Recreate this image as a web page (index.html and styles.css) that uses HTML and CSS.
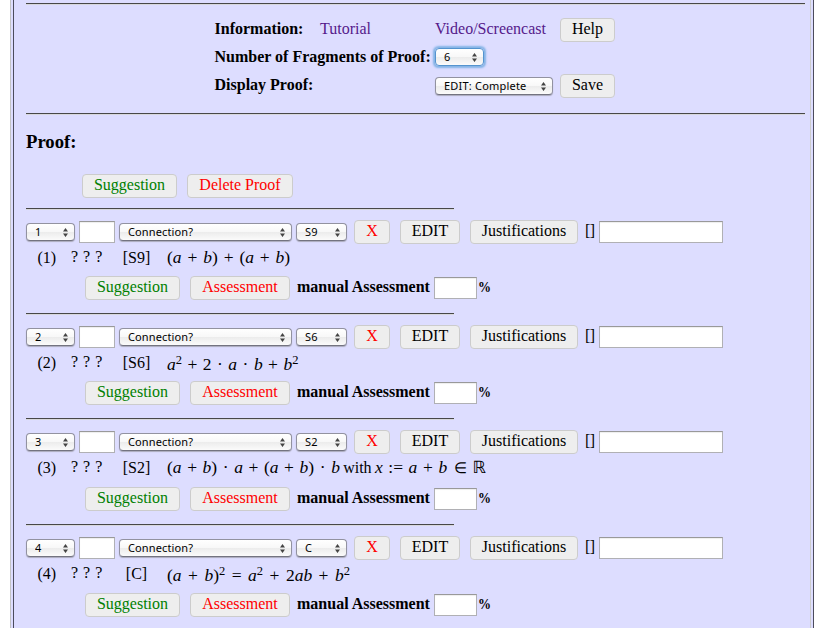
FILE: index.html
```html
<!DOCTYPE html>
<html lang="en">
<head>
<meta charset="utf-8">
<title>Proof</title>
<link rel="stylesheet" href="styles.css">
</head>
<body>
<svg class="defs"><symbol id="arrows" viewBox="0 0 5 9"><path d="M0 3.5 2.5 0 5 3.5zM0 5.5 2.5 9 5 5.5z" fill="#444"/></symbol></svg>
<div class="frame"><main class="page">
<hr>
<section class="settings">
<div class="setting"><b class="info">Information:</b><a class="tutorial">Tutorial</a><a class="video">Video/Screencast</a><button class="btn help">Help</button></div>
<div class="setting"><b class="label">Number of Fragments of Proof:</b><span class="select count focus"><select><option>6</option></select><svg><use href="#arrows"/></svg></span></div>
<div class="setting"><b class="label">Display Proof:</b><span class="select mode"><select><option>EDIT: Complete</option></select><svg><use href="#arrows"/></svg></span><button class="btn help">Save</button></div>
</section>
<hr>
<h3>Proof:</h3>
<div class="actions"><button class="btn green">Suggestion</button><button class="btn red delete">Delete Proof</button></div>
<div id="steps"></div>
</main></div>
<script src="script.js"></script>
</body>
</html>
```
FILE: styles.css
```css
* { box-sizing: border-box; }
html, body { margin: 0; height: 628px; overflow: hidden; background: #fff; }
body { font: 16px/20px "Liberation Serif", serif; color: #000; }
.defs { display: none; }
.frame { margin-left: 10px; width: 804px; height: 628px; padding: 0 2px; border-left: 1px solid #c4c4c4; border-right: 1px solid #4c4c5c; background: #ddf; }
.page { width: 798px; height: 628px; padding: 3px 5px 0 12px; border-left: 1px solid #4c4c5c; border-right: 1px solid #ccc; }
hr { margin: 0; height: 2px; border: 0; border-top: 1px solid #484848; border-bottom: 1px solid #d8d8dc; }
.settings { height: 108px; padding: 11px 0 0 188px; }
.setting { display: flex; align-items: center; height: 28px; white-space: nowrap; }
.setting b, .setting a { position: relative; top: -1px; }
.setting b { left: .5px; }
.info { width: 106px; }
.tutorial { width: 115px; color: #551a8b; }
.video { width: 118px; color: #551a8b; }
.label { width: 221px; }
.btn { flex: none; height: 24px; margin: 0; padding: 0 0 3px; border: 1px solid #ccc; border-radius: 4px; background: #eee; font: 16px/18px "Liberation Serif", serif; color: #000; width: 95px; white-space: nowrap; }
.help { width: 55px; margin-left: 7px; }
.green { color: #008000; }
.red { color: #f00; }
.select { position: relative; flex: none; height: 18px; border: 1px solid #9292a0; border-bottom-color: #737380; border-radius: 4px; background: linear-gradient(#fff, #f8f8f8 48%, #ececec 52%, #fbfbfb); box-shadow: 0 1px 1px #aaaabc; }
.select select { display: block; appearance: none; width: 100%; height: 16px; margin: 0; padding: 0 0 0 8px; border: 0; outline: 0; background: none; font: 11px/16px "Noto Sans", sans-serif; letter-spacing: .12px; color: #000; }
.select svg { position: absolute; right: 6px; top: 4px; width: 5px; height: 9px; }
.focus { top: -1px; border-color: #5594cf; box-shadow: 0 0 2px 1.5px #83b3e6; }
.count { width: 49px; }
.mode { width: 118px; }
.mode select { letter-spacing: .2px; }
h3 { margin: 0; padding-top: 15px; height: 59px; font-size: 18.7px; line-height: 24px; }
.actions { display: flex; gap: 10px; height: 34px; padding-left: 56px; }
.delete { width: 106px; }
.step { height: 105px; }
.step:nth-child(3) { height: 106px; }
.step hr { width: 428px; }
.controls { display: flex; align-items: center; height: 24px; margin-top: 10px; }
input { flex: none; display: block; margin: 0; padding: 0; height: 22px; border: 1px solid #b0b0b4; border-top-color: #999; border-radius: 0; background: #fff; box-shadow: inset 0 1px 1px #eee; }
.num { width: 49px; }
.mark { width: 36px; margin: 0 4px; }
.conn { width: 173px; }
.ref { width: 51px; margin: 0 7px 0 4px; }
.x { width: 36px; }
.edit { width: 60px; margin: 0 10px; }
.just { width: 108px; }
.brackets { width: 14px; margin-left: 7px; position: relative; top: -1px; letter-spacing: -.5px; }
.reason { width: 124px; }
.line { display: flex; height: 32px; padding: 3px 0 0 11px; white-space: nowrap; }
.step:nth-child(n+3) .line { height: 33px; }
.line > span { position: relative; }
.idx { width: 34px; left: .5px; top: 1px; }
.marks { width: 44px; top: -.5px; letter-spacing: .5px; }
.src { width: 53px; text-align: center; padding-right: 9px; left: -.5px; top: 1px; }
.math { font-size: 17.5px; left: -1px; word-spacing: 1.1px; }
.m1 { word-spacing: 1.5px; }
.m2 { top: 2px; }
.m3 { word-spacing: 1.2px; }
.m4 { top: 2px; word-spacing: 2.1px; }
.math sup { font-size: 12.5px; line-height: 0; vertical-align: 6px; }
.math .word { font-size: 16px; word-spacing: -.7px; letter-spacing: 0; }
.member { display: inline-block; font-size: 15px; margin: 0 5px 0 6px; width: 14px; text-align: center; }
.real { font: 17px/16px "DejaVu Sans", sans-serif; }
.assess { display: flex; align-items: center; height: 24px; padding-left: 59px; }
.assess .red { width: 100px; margin: 0 7px 0 10px; }
.assess b { white-space: nowrap; position: relative; top: -1px; }
.manual { width: 137px; }
.score { width: 43px; margin-right: 1px; }
.assess .percent { font-size: 15.5px; transform: scaleX(.84); transform-origin: left; }
```
FILE: script.js
```js
const arrows = '<svg><use href="#arrows"/></svg>';
const select = (cls, text) => `<span class="select ${cls}"><select><option>${text}</option></select>${arrows}</span>`;
const steps = [
  ['S9', '(<i>a</i> + <i>b</i>) + (<i>a</i> + <i>b</i>)'],
  ['S6', '<i>a</i><sup>2</sup> + 2 · <i>a</i> · <i>b</i> + <i>b</i><sup>2</sup>'],
  ['S2', '(<i>a</i> + <i>b</i>) · <i>a</i> + (<i>a</i> + <i>b</i>) · <i>b</i><span class="word"> with </span><i>x</i> := <i>a</i> + <i>b</i><span class="member">∈</span><span class="real">ℝ</span>'],
  ['C', '(<i>a</i> + <i>b</i>)<sup>2</sup> = <i>a</i><sup>2</sup> + 2<i>ab</i> + <i>b</i><sup>2</sup>']
];
document.getElementById('steps').innerHTML = steps.map(([ref, math], i) => `
<section class="step"><hr>
<div class="controls">${select('num', i + 1)}<input class="mark">${select('conn', 'Connection?')}${select('ref', ref)}<button class="btn red x">X</button><button class="btn edit">EDIT</button><button class="btn just">Justifications</button><span class="brackets">[]</span><input class="reason"></div>
<div class="line"><span class="idx">(${i + 1})</span><span class="marks">? ? ?</span><span class="src">[${ref}]</span><span class="math m${i + 1}">${math}</span></div>
<div class="assess"><button class="btn green">Suggestion</button><button class="btn red">Assessment</button><b class="manual">manual Assessment</b><input class="score"><b class="percent">%</b></div>
</section>`).join('');
```
